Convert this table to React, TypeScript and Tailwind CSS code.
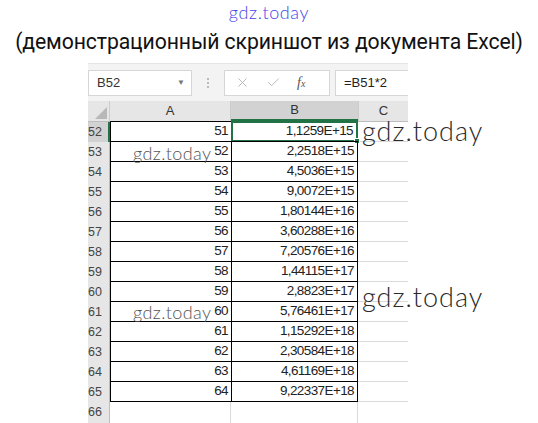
import { X, Check } from "lucide-react";

const rows = [
  { n: 52, a: "51", b: "1,1259E+15" },
  { n: 53, a: "52", b: "2,2518E+15" },
  { n: 54, a: "53", b: "4,5036E+15" },
  { n: 55, a: "54", b: "9,0072E+15" },
  { n: 56, a: "55", b: "1,80144E+16" },
  { n: 57, a: "56", b: "3,60288E+16" },
  { n: 58, a: "57", b: "7,20576E+16" },
  { n: 59, a: "58", b: "1,44115E+17" },
  { n: 60, a: "59", b: "2,8823E+17" },
  { n: 61, a: "60", b: "5,76461E+17" },
  { n: 62, a: "61", b: "1,15292E+18" },
  { n: 63, a: "62", b: "2,30584E+18" },
  { n: 64, a: "63", b: "4,61169E+18" },
  { n: 65, a: "64", b: "9,22337E+18" },
];

const uiFont = { fontFamily: "'Liberation Sans', Arial, sans-serif" };
const markFont = { fontFamily: "'Lato', 'Noto Sans', sans-serif" };

function Mark({ className }: { className: string }) {
  return (
    <span className={`font-light leading-none ${className}`} style={markFont}>
      gdz.today
    </span>
  );
}

export default function App() {
  return (
    <div className="w-[538px] h-[423px] bg-white relative overflow-hidden">
      <div className="flex justify-center pt-[3px] h-[25px]">
        <Mark className="text-[18px] tracking-[0.6px] text-[#4545e6]" />
      </div>
      <div
        className="text-center text-[21.2px] leading-[30px] text-[#111] tracking-[-0.1px] mt-[2px]"
        style={{ fontFamily: "Roboto, 'Noto Sans', sans-serif" }}
      >
        (демонстрационный скриншот из документа Excel)
      </div>

      {/* Excel screenshot */}
      <div className="ml-[88px] mt-[6px] w-[320px] bg-white" style={uiFont}>
        {/* formula bar */}
        <div className="h-[38px] bg-[#f3f3f3] flex items-center border-t border-[#e4e4e4]">
          <div className="w-[104px] h-[26px] bg-white border border-[#d6d6d6] flex items-center pl-[8px] pr-[6px] text-[13px] text-[#333]">
            <span className="flex-1">B52</span>
            <span className="text-[8px] text-[#777]">▼</span>
          </div>
          <div className="w-[32px] flex flex-col items-center gap-[2px]">
            <span className="w-[2px] h-[2px] bg-[#bbb]" />
            <span className="w-[2px] h-[2px] bg-[#bbb]" />
            <span className="w-[2px] h-[2px] bg-[#bbb]" />
          </div>
          <div className="w-[106px] h-[26px] bg-white border border-[#d6d6d6] flex items-center pl-[10px] gap-[16px] text-[#aaa]">
            <X size={15} strokeWidth={1.3} />
            <Check size={15} strokeWidth={1.3} />
            <span className="text-[14px] italic text-[#555]" style={{ fontFamily: "'Liberation Serif', serif" }}>
              f<span className="text-[10px]">x</span>
            </span>
          </div>
          <div className="ml-[5px] flex-1 h-[26px] bg-white border border-[#d6d6d6] border-r-0 flex items-center pl-[8px] text-[13px] text-[#222]">
            =B51*2
          </div>
        </div>

        {/* column headers */}
        <div className="flex h-[21px] bg-[#e6e6e6] border-b border-[#bdbdbd] text-[13px] text-[#333]">
          <div className="w-[22px] flex items-end justify-end pr-[2px] pb-[2px] border-r border-[#ccc]">
            <div className="w-0 h-0 border-l-[12px] border-l-transparent border-b-[12px] border-b-[#b8b8b8]" />
          </div>
          <div className="w-[121px] flex items-center justify-center border-r border-[#ccc]">A</div>
          <div className="w-[127px] flex items-center justify-center bg-[#d2d2d2] border-b-2 border-[#217346]">B</div>
          <div className="flex-1 flex items-center justify-center border-l border-[#ccc]">C</div>
        </div>

        {/* rows */}
        {rows.map((r, i) => {
          const active = i === 0;
          return (
            <div key={r.n} className="flex h-[20px] text-[13.5px] tracking-[-0.6px] text-[#222]">
              <div
                className={`w-[22px] flex items-center text-[12.5px] tracking-normal text-[#444] ${
                  active ? "bg-[#d2d2d2] border-r-2 border-[#217346]" : "bg-[#e6e6e6] border-r border-[#bdbdbd]"
                }`}
              >
                <span>{r.n}</span>
              </div>
              <div className="w-[121px] flex items-center justify-end pr-[3px] border border-black border-r-0 -mt-px h-[21px]">
                {r.a}
              </div>
              <div
                className={`w-[127px] h-[21px] -mt-px flex items-center justify-end pr-[3px] relative ${
                  active ? "border-2 border-[#217346]" : "border border-black"
                }`}
              >
                {r.b}
                {active && (
                  <span className="absolute -right-[4px] -bottom-[4px] w-[6px] h-[6px] bg-[#217346] border border-white" />
                )}
              </div>
              <div className="flex-1 border-b border-[#dadada]" />
            </div>
          );
        })}
        <div className="flex h-[21px] text-[12.5px] text-[#444]">
          <div className="w-[22px] bg-[#e6e6e6] border-r border-[#bdbdbd] flex items-center">
            <span>66</span>
          </div>
          <div className="w-[121px] border-r border-[#dadada]" />
          <div className="w-[127px] border-r border-[#dadada]" />
        </div>
      </div>

      {/* watermarks */}
      <Mark className="absolute left-[362px] top-[117px] text-[27px] tracking-[1px] text-[#2a2a2a]" />
      <Mark className="absolute left-[362px] top-[283px] text-[27px] tracking-[1px] text-[#2a2a2a]" />
      <Mark className="absolute left-[133px] top-[144px] text-[18px] tracking-[0.4px] text-[#555]" />
      <Mark className="absolute left-[133px] top-[303px] text-[18px] tracking-[0.4px] text-[#555]" />
    </div>
  );
}
